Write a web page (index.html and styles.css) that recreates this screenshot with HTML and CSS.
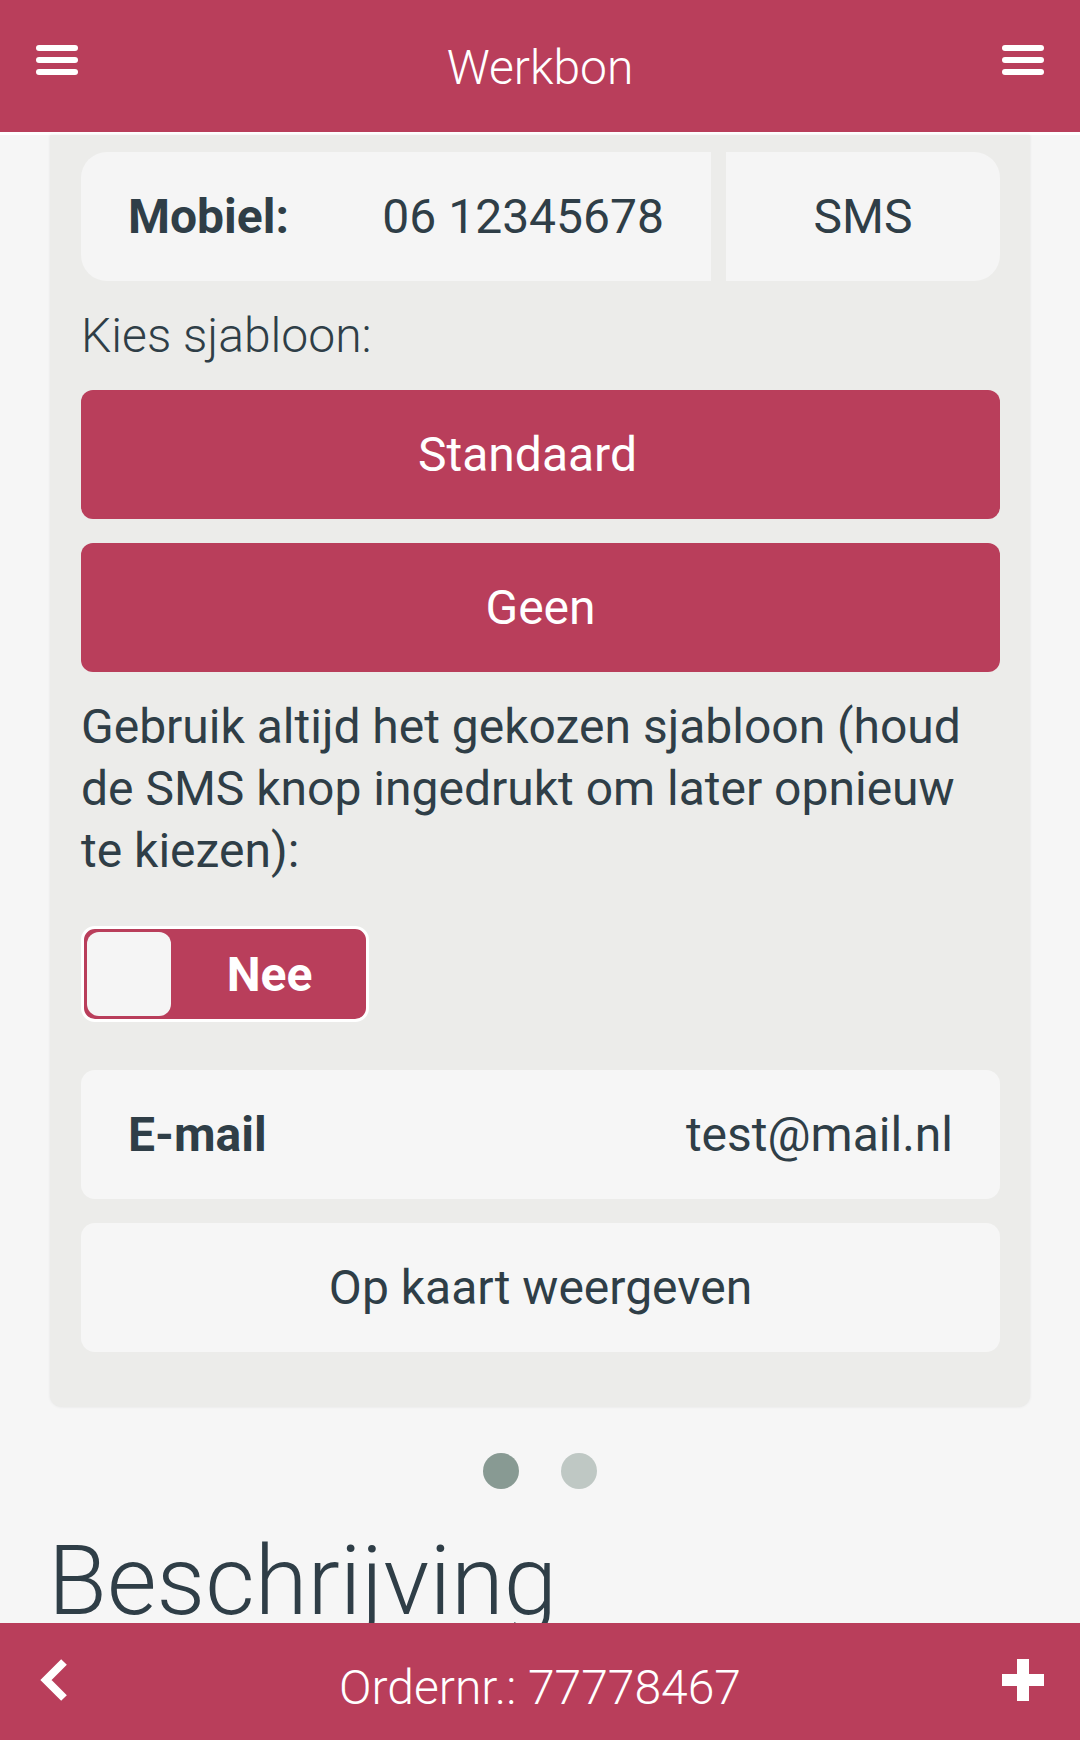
FILE: index.html
```html
<!DOCTYPE html>
<html lang="nl">
<head>
<meta charset="utf-8">
<title>Werkbon</title>
<link rel="stylesheet" href="styles.css">
</head>
<body>
<header class="topbar">
  <svg class="menu-icon" width="42" height="30" viewBox="0 0 42 30"><rect x="0" y="0" width="42" height="6" rx="3" fill="#fff"/><rect x="0" y="12" width="42" height="6" rx="3" fill="#fff"/><rect x="0" y="24" width="42" height="6" rx="3" fill="#fff"/></svg>
  <h1 class="topbar-title">Werkbon</h1>
  <svg class="menu-icon" width="42" height="30" viewBox="0 0 42 30"><rect x="0" y="0" width="42" height="6" rx="3" fill="#fff"/><rect x="0" y="12" width="42" height="6" rx="3" fill="#fff"/><rect x="0" y="24" width="42" height="6" rx="3" fill="#fff"/></svg>
</header>

<main class="content">
  <section class="card">
    <div class="phone-row">
      <div class="phone-box">
        <span class="label">Mobiel:</span>
        <span class="value">06 12345678</span>
      </div>
      <div class="sms-box">SMS</div>
    </div>

    <p class="choose">Kies sjabloon:</p>

    <button class="btn btn-offset">Standaard</button>
    <button class="btn">Geen</button>

    <p class="note">Gebruik altijd het gekozen sjabloon (houd de SMS knop ingedrukt om later opnieuw te kiezen):</p>

    <div class="toggle">
      <span class="knob"></span>
      <span class="toggle-text">Nee</span>
    </div>

    <div class="info-box">
      <span class="label">E-mail</span>
      <span class="value">test@mail.nl</span>
    </div>
    <div class="info-box center">Op kaart weergeven</div>
  </section>

  <div class="dots">
    <span class="dot active"></span>
    <span class="dot"></span>
  </div>

  <h2 class="section-title">Beschrijving</h2>
</main>

<footer class="bottombar">
  <svg class="back-icon" width="28" height="42" viewBox="0 0 28 42"><polyline points="24,3 6,21 24,39" fill="none" stroke="#fff" stroke-width="8" stroke-linejoin="miter" stroke-linecap="butt"/></svg>
  <span class="order">Ordernr.: 77778467</span>
  <svg class="plus-icon" width="42" height="42" viewBox="0 0 42 42"><rect x="15" y="0" width="12" height="42" fill="#fff"/><rect x="0" y="15" width="42" height="12" fill="#fff"/></svg>
</footer>
</body>
</html>
```

FILE: styles.css
```css
* { box-sizing: border-box; }

html, body {
  margin: 0;
  padding: 0;
}

body {
  width: 1080px;
  height: 1740px;
  overflow: hidden;
  background: #f6f6f6;
  font-family: Roboto, "Noto Sans", "Liberation Sans", sans-serif;
  color: #2f3e47;
}

.topbar {
  height: 135px;
  background: #b93e5b;
  border-bottom: 3px solid #ffffff;
  display: flex;
  align-items: flex-start;
  justify-content: space-between;
  padding: 0 36px;
}

.menu-icon {
  display: block;
  margin-top: 45px;
}

.topbar-title {
  margin: 0;
  height: 132px;
  padding-top: 2px;
  line-height: 132px;
  font-size: 48px;
  font-weight: 300;
  color: #ffffff;
}

.content {
  padding: 0;
}

.card {
  margin: 0 50px;
  background: #ececea;
  border-radius: 0 0 12px 12px;
  box-shadow: 0 0 3px rgba(0, 0, 0, 0.08);
  padding: 17px 30px 55px 31px;
  display: flex;
  flex-direction: column;
}

.phone-row {
  display: flex;
  gap: 15px;
  height: 129px;
}

.phone-box {
  flex: 1;
  background: #f5f5f5;
  border-radius: 26px 0 0 26px;
  display: flex;
  align-items: center;
  justify-content: space-between;
  padding: 0 47px;
  font-size: 48px;
}

.sms-box {
  width: 274px;
  background: #f5f5f5;
  border-radius: 0 26px 26px 0;
  display: flex;
  align-items: center;
  justify-content: center;
  font-size: 48px;
}

.label {
  font-weight: 700;
}

.choose {
  margin: 24px 0 23px;
  font-size: 48px;
  line-height: 62px;
  font-weight: 300;
}

.btn {
  display: block;
  width: 100%;
  height: 129px;
  border: none;
  border-radius: 12px;
  background: #b93e5b;
  color: #ffffff;
  font-family: inherit;
  font-size: 48px;
  font-weight: 400;
  padding: 0;
  margin: 0 0 24px;
}

.btn-offset {
  padding-right: 26px;
}

.note {
  margin: 0 0 44px;
  font-size: 48px;
  line-height: 62px;
}

.toggle {
  width: 288px;
  height: 96px;
  border: 3px solid #ffffff;
  border-radius: 14px;
  background: #b93e5b;
  display: flex;
  align-items: center;
  padding: 3px;
  margin-bottom: 48px;
}

.knob {
  width: 84px;
  height: 84px;
  border-radius: 12px;
  background: #f5f5f5;
  flex: none;
}

.toggle-text {
  flex: 1;
  text-align: center;
  color: #ffffff;
  font-weight: 700;
  font-size: 48px;
  padding-left: 5px;
}

.info-box {
  height: 129px;
  background: #f6f6f6;
  border-radius: 14px;
  display: flex;
  align-items: center;
  justify-content: space-between;
  padding: 0 47px;
  font-size: 48px;
  margin-bottom: 24px;
}

.info-box:last-child {
  margin-bottom: 0;
}

.info-box.center {
  justify-content: center;
}

.dots {
  display: flex;
  justify-content: center;
  gap: 42px;
  margin-top: 46px;
}

.dot {
  width: 36px;
  height: 36px;
  border-radius: 50%;
  background: #bfc8c4;
}

.dot.active {
  background: #889a93;
}

.section-title {
  margin: 36px 0 0 48px;
  font-size: 96px;
  font-weight: 300;
  line-height: 112px;
}

.bottombar {
  position: fixed;
  left: 0;
  right: 0;
  bottom: 0;
  height: 117px;
  background: #b93e5b;
  display: grid;
  grid-template-columns: 1fr auto 1fr;
  align-items: center;
  padding: 0 36px 0 40px;
}

.back-icon,
.plus-icon {
  display: block;
  margin-bottom: 4px;
}

.plus-icon {
  justify-self: end;
}

.order {
  color: #ffffff;
  font-size: 48px;
  font-weight: 300;
  padding-top: 12px;
  margin-left: -4px;
}
```
